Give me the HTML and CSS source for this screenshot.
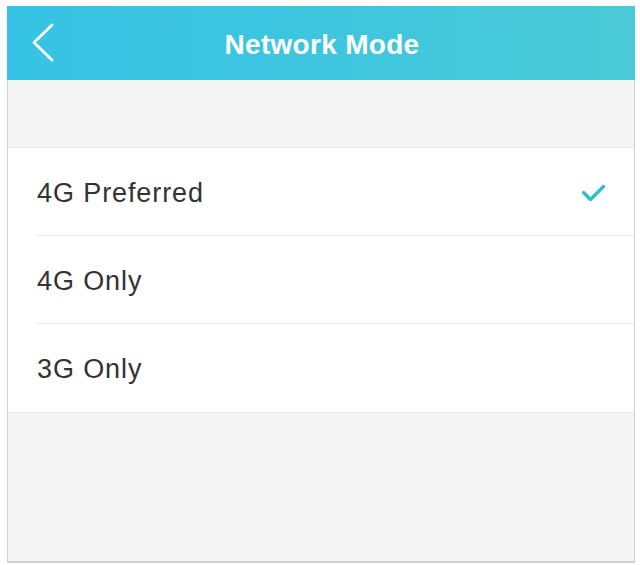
FILE: index.html
```html
<!DOCTYPE html>
<html>
<head>
<meta charset="utf-8">
<link rel="stylesheet" href="styles.css">
</head>
<body>
<div class="frame">
  <header class="topbar">
    <span class="back">
      <svg width="24" height="40" viewBox="0 0 24 40"><path d="M21 2 L3 19.5 L21 37" fill="none" stroke="#fff" stroke-width="2.8" stroke-linecap="round" stroke-linejoin="round"/></svg>
    </span>
    <h1 class="title">Network Mode</h1>
  </header>
  <div class="spacer"></div>
  <ul class="list">
    <li class="item"><span>4G Preferred</span>
      <svg class="check" width="26" height="20" viewBox="0 0 26 20"><path d="M2.5 9.5 L9.5 16.5 L22.5 3.5" fill="none" stroke="#2fbccd" stroke-width="3.2" stroke-linecap="round" stroke-linejoin="round"/></svg>
    </li>
    <li class="item"><span>4G Only</span></li>
    <li class="item"><span>3G Only</span></li>
  </ul>
</div>
</body>
</html>
```
FILE: styles.css
```css
html, body {
  margin: 0;
  padding: 0;
  background: #ffffff;
}
body {
  padding: 6px 5px 2px 7px;
  font-family: "Liberation Sans", Arial, sans-serif;
}
.frame {
  height: 557px;
  box-sizing: border-box;
  background: #f5f5f5;
  border-left: 1px solid #d2d2d2;
  border-right: 1px solid #d2d2d2;
  border-bottom: 2px solid #cfcfcf;
  display: flex;
  flex-direction: column;
}
.topbar {
  height: 74px;
  margin: 0 -1px;
  background: linear-gradient(90deg, #37c3e5 0%, #3cc5e0 40%, #4acad6 100%);
  display: flex;
  align-items: center;
  justify-content: center;
  position: relative;
}
.back {
  position: absolute;
  left: 24px;
  top: 17px;
  display: flex;
}
.title {
  margin: 0;
  padding: 3px 0 0 2px;
  color: #ffffff;
  font-size: 28px;
  font-weight: bold;
  letter-spacing: 0.3px;
}
.spacer {
  height: 67px;
  border-bottom: 1px solid #e6e6e6;
}
.list {
  list-style: none;
  margin: 0;
  padding: 0 0 0 28px;
  background: #ffffff;
  border-bottom: 1px solid #e6e6e6;
}
.item {
  height: 88px;
  box-sizing: border-box;
  display: flex;
  align-items: center;
  justify-content: space-between;
  padding: 3px 27px 0 1px;
  border-bottom: 1px solid #e9e9e9;
  font-size: 27px;
  letter-spacing: 0.9px;
  color: #333333;
}
.item:last-child {
  border-bottom: none;
}
.check {
  margin-top: -1px;
}
```
